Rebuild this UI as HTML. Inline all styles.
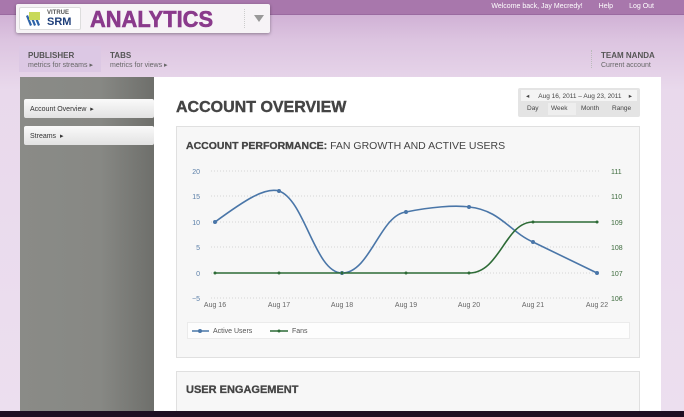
<!DOCTYPE html>
<html><head><style>
*{margin:0;padding:0;box-sizing:border-box}
body{width:684px;height:417px;overflow:hidden;position:relative;font-family:"Liberation Sans",sans-serif;background:linear-gradient(180deg,#c9a6cf 0px,#dcc4e0 40px,#e9d9ec 90px,#ecdfef 100%)}
.topbar{position:absolute;left:0;top:0;width:684px;height:15px;background:#a877ac;border-bottom:1px solid #9a6aa0}
.topbar .r{position:absolute;right:30px;top:3px;font-size:7px;color:#fff}
.topbar .r span{margin-left:16px}
.logo{position:absolute;left:16px;top:4px;width:254px;height:29px;background:#f6f3f6;box-shadow:0 1px 3px rgba(0,0,0,.35);border-radius:2px}
.lbox{position:absolute;left:3px;top:3px;width:62px;height:23px;background:#fff;border:1px solid #ddd;border-radius:2px}
.an{position:absolute;left:74px;top:2px;font-size:23px;font-weight:900;color:#8a3a8c;letter-spacing:0;-webkit-text-stroke:.6px #8a3a8c;transform:scaleX(.95);transform-origin:left}
.tri{position:absolute;left:238px;top:11px;width:0;height:0;border-left:5px solid transparent;border-right:5px solid transparent;border-top:7px solid #999}
.nav{position:absolute;top:51px;font-size:7px;color:#666;line-height:9px}
.nav b{font-size:8px;color:#555}
.side{position:absolute;left:20px;top:77px;width:134px;height:334px;background:linear-gradient(90deg,#8a8b87,#878884 60%,#6e6f6b)}
.pubtab{position:absolute;left:19px;top:46px;width:82px;height:26px;background:#dcc8e4}
.btn{position:absolute;left:24px;width:130px;height:19px;background:linear-gradient(#fafafa,#e2e2e2);border-radius:2px;font-size:7px;color:#333;padding:6px 0 0 6px}
.main{position:absolute;left:154px;top:77px;width:507px;height:334px;background:#fff}
h1{position:absolute;left:176px;top:99px;font-size:16px;color:#444;font-weight:bold;-webkit-text-stroke:.4px #444}
.dp{position:absolute;left:518px;top:88px;width:122px;height:29px;background:#e4e4e4;border-radius:2px;font-size:6.5px;color:#444}
.box{position:absolute;left:176px;width:464px;background:#f7f7f7;border:1px solid #e0e0e0}
.bot{position:absolute;left:0;top:411px;width:684px;height:6px;background:#1e0f22}
</style></head><body>
<div class="topbar"><div class="r"><span>Welcome back, Jay Mecredy!</span><span>Help</span><span>Log Out</span></div></div>
<div class="logo"><div class="lbox">
<svg width="20" height="18" style="position:absolute;left:4px;top:2px"><g fill="#2f64a8"><path d="M2 6l4 10 2-1-4-10z"/><path d="M6 6l4 10 2-1-4-10z"/><path d="M10 6l4 10 2-1-4-10z"/></g><path d="M5 2h11v8H5z" fill="#c8d95a"/></svg>
<div style="position:absolute;left:27px;top:2px;font-size:6px;font-weight:bold;color:#555">VITRUE</div>
<div style="position:absolute;left:27px;top:8px;font-size:11px;font-weight:bold;color:#1f3f7a">SRM</div></div>
<div class="an">ANALYTICS</div><div style="position:absolute;left:228px;top:5px;height:19px;border-left:1px dotted #ccc"></div><div class="tri"></div></div>
<div class="pubtab"></div>
<div class="nav" style="left:28px"><b>PUBLISHER</b><br>metrics for streams ▸</div>
<div class="nav" style="left:110px"><b>TABS</b><br>metrics for views ▸</div>
<div class="nav" style="left:601px"><b>TEAM NANDA</b><br>Current account</div>
<div style="position:absolute;left:591px;top:50px;height:18px;border-left:1px dotted #bbb"></div>
<div class="side"></div>
<div class="btn" style="top:99px">Account Overview &nbsp;▸</div>
<div class="btn" style="top:126px">Streams &nbsp;▸</div>
<div class="main"></div>
<h1>ACCOUNT OVERVIEW</h1>
<div class="dp"><div style="position:absolute;left:3px;top:2px;width:116px;height:11px;background:#f4f4f4;padding:2px 0 0 5px">◂ &nbsp;&nbsp;&nbsp;&nbsp;Aug 16, 2011 – Aug 23, 2011<span style="position:absolute;right:5px">▸</span></div>
<div style="position:absolute;top:17px;left:9px">Day</div><div style="position:absolute;top:15px;left:30px;width:28px;height:12px;background:#eeeeee"></div><div style="position:absolute;top:17px;left:33px">Week</div><div style="position:absolute;top:17px;left:63px">Month</div><div style="position:absolute;top:17px;left:94px">Range</div></div>
<div class="box" style="top:126px;height:232px">
<div style="position:absolute;left:9px;top:13px;font-size:10.5px;color:#444"><b style="-webkit-text-stroke:.3px #444">ACCOUNT PERFORMANCE:</b> FAN GROWTH AND ACTIVE USERS</div>
<div style="position:absolute;left:10px;top:195px;width:443px;height:17px;background:#fdfdfd;border:1px solid #ebebeb"></div>
</div>
<svg style="position:absolute;left:0;top:0" width="684" height="417" font-family="Liberation Sans" font-size="7">
<g stroke="#ccc" stroke-dasharray="1,2" stroke-width=".7"><line x1="211" x2="599" y1="171" y2="171"/><line x1="211" x2="599" y1="196" y2="196"/><line x1="211" x2="599" y1="222" y2="222"/><line x1="211" x2="599" y1="247" y2="247"/><line x1="211" x2="599" y1="273" y2="273"/><line x1="211" x2="599" y1="298" y2="298"/></g>
<g fill="#5b7fa8" text-anchor="end"><text x="200" y="174">20</text><text x="200" y="199">15</text><text x="200" y="225">10</text><text x="200" y="250">5</text><text x="200" y="276">0</text><text x="200" y="301">−5</text></g>
<g fill="#3c6a3c"><text x="611" y="174">111</text><text x="611" y="199">110</text><text x="611" y="225">109</text><text x="611" y="250">108</text><text x="611" y="276">107</text><text x="611" y="301">106</text></g>
<g fill="#666" text-anchor="middle"><text x="215" y="307">Aug 16</text><text x="279" y="307">Aug 17</text><text x="342" y="307">Aug 18</text><text x="406" y="307">Aug 19</text><text x="469" y="307">Aug 20</text><text x="533" y="307">Aug 21</text><text x="597" y="307">Aug 22</text></g>
<path d="M215 222C245 200 265 187 279 191C305 200 315 273 342 273C370 273 380 215 406 212C430 207 455 205 469 207C500 210 510 232 533 242L597 273" fill="none" stroke="#4a76a8" stroke-width="1.6"/>
<path d="M215 273H469C500 273 505 222 533 222H597" fill="none" stroke="#2d6b36" stroke-width="1.6"/>
<g fill="#4a76a8"><circle cx="215" cy="222" r="2"/><circle cx="279" cy="191" r="2"/><circle cx="342" cy="273" r="2"/><circle cx="406" cy="212" r="2"/><circle cx="469" cy="207" r="2"/><circle cx="533" cy="242" r="2"/><circle cx="597" cy="273" r="2"/></g>
<g fill="#2d6b36"><circle cx="215" cy="273" r="1.5"/><circle cx="279" cy="273" r="1.5"/><circle cx="342" cy="273" r="1.5"/><circle cx="406" cy="273" r="1.5"/><circle cx="469" cy="273" r="1.5"/><circle cx="533" cy="222" r="1.5"/><circle cx="597" cy="222" r="1.5"/></g>
<line x1="192" x2="209" y1="331" y2="331" stroke="#4a76a8" stroke-width="1.5"/><circle cx="200" cy="331" r="2" fill="#4a76a8"/><text x="213" y="333" fill="#555">Active Users</text>
<line x1="270" x2="288" y1="331" y2="331" stroke="#2d6b36" stroke-width="1.5"/><circle cx="279" cy="331" r="1.5" fill="#2d6b36"/><text x="292" y="333" fill="#555">Fans</text>
</svg>
<div class="box" style="top:371px;height:45px"><div style="position:absolute;left:9px;top:12px;font-size:11px;font-weight:bold;color:#444;-webkit-text-stroke:.3px #444">USER ENGAGEMENT</div></div>
<div class="bot"></div>
</body></html>
